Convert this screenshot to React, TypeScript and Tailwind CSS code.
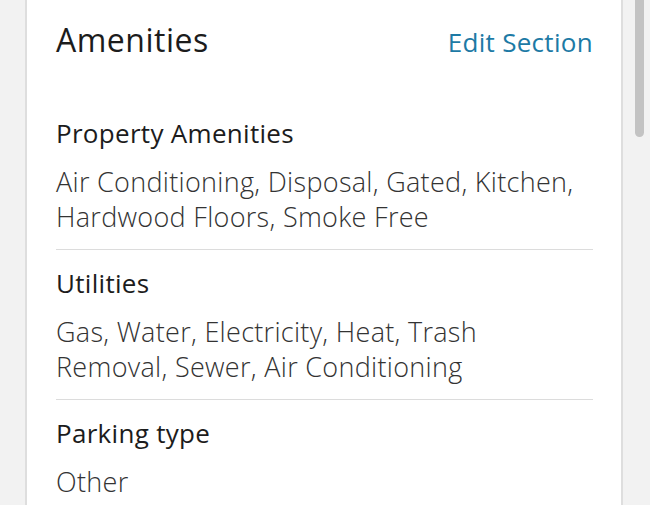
import React from "react";

//----------------------------------------------------------------------------------//
type Section = {
  title: string;
  lines: string[];
};
//----------------------------------------------------------------------------------//
const sections: Section[] = [
  {
    title: "Property Amenities",
    lines: ["Air Conditioning, Disposal, Gated, Kitchen,", "Hardwood Floors, Smoke Free"],
  },
  {
    title: "Utilities",
    lines: ["Gas, Water, Electricity, Heat, Trash", "Removal, Sewer, Air Conditioning"],
  },
  {
    title: "Parking type",
    lines: ["Other"],
  },
];
//----------------------------------------------------------------------------------//
const App = () => {
  return (
    <div
      className="flex h-[505px] w-[650px] overflow-hidden bg-[#f2f2f2]"
      style={{ fontFamily: "'Open Sans', 'Noto Sans', sans-serif" }}
    >
      {/* left gutter */}
      <div className="w-[27px] shrink-0 border-r-2 border-[#dedede] bg-[#f2f2f2]" />

      {/* card */}
      <div className="flex-1 overflow-hidden bg-white pl-[29px] pr-[28px]">
        <div className="flex items-baseline justify-between pt-[20px]">
          <div className="text-[32px] leading-[40px] font-normal tracking-[0.5px] text-[#1c1c1c]">
            Amenities
          </div>
          <div className="text-[26px] leading-[40px] font-normal tracking-[0.3px] text-[#1d7aa5]">
            Edit Section
          </div>
        </div>

        <div className="mt-[54px] flex flex-col">
          {sections.map((s, i) => (
            <div
              key={s.title}
              className={`flex flex-col ${i < sections.length - 1 ? "mb-[16px] border-b border-[#dcdcdc] pb-[15px]" : ""}`}
            >
              <div className="text-[26px] leading-[35px] font-medium tracking-[0.3px] text-[#1c1c1c]">
                {s.title}
              </div>
              <div className="mt-[13px] text-[27px] leading-[35px] font-light tracking-[0.3px] text-[#333333]">
                {s.lines.map((l) => (
                  <div key={l}>{l}</div>
                ))}
              </div>
            </div>
          ))}
        </div>
      </div>

      {/* right gutter with scrollbar */}
      <div className="w-[29px] shrink-0 border-l-2 border-[#dedede] bg-[#f2f2f2] pl-[12px]">
        <div className="h-[137px] w-[9px] rounded-b-full bg-[#c3c3c3]" />
      </div>
    </div>
  );
};

export default App;
